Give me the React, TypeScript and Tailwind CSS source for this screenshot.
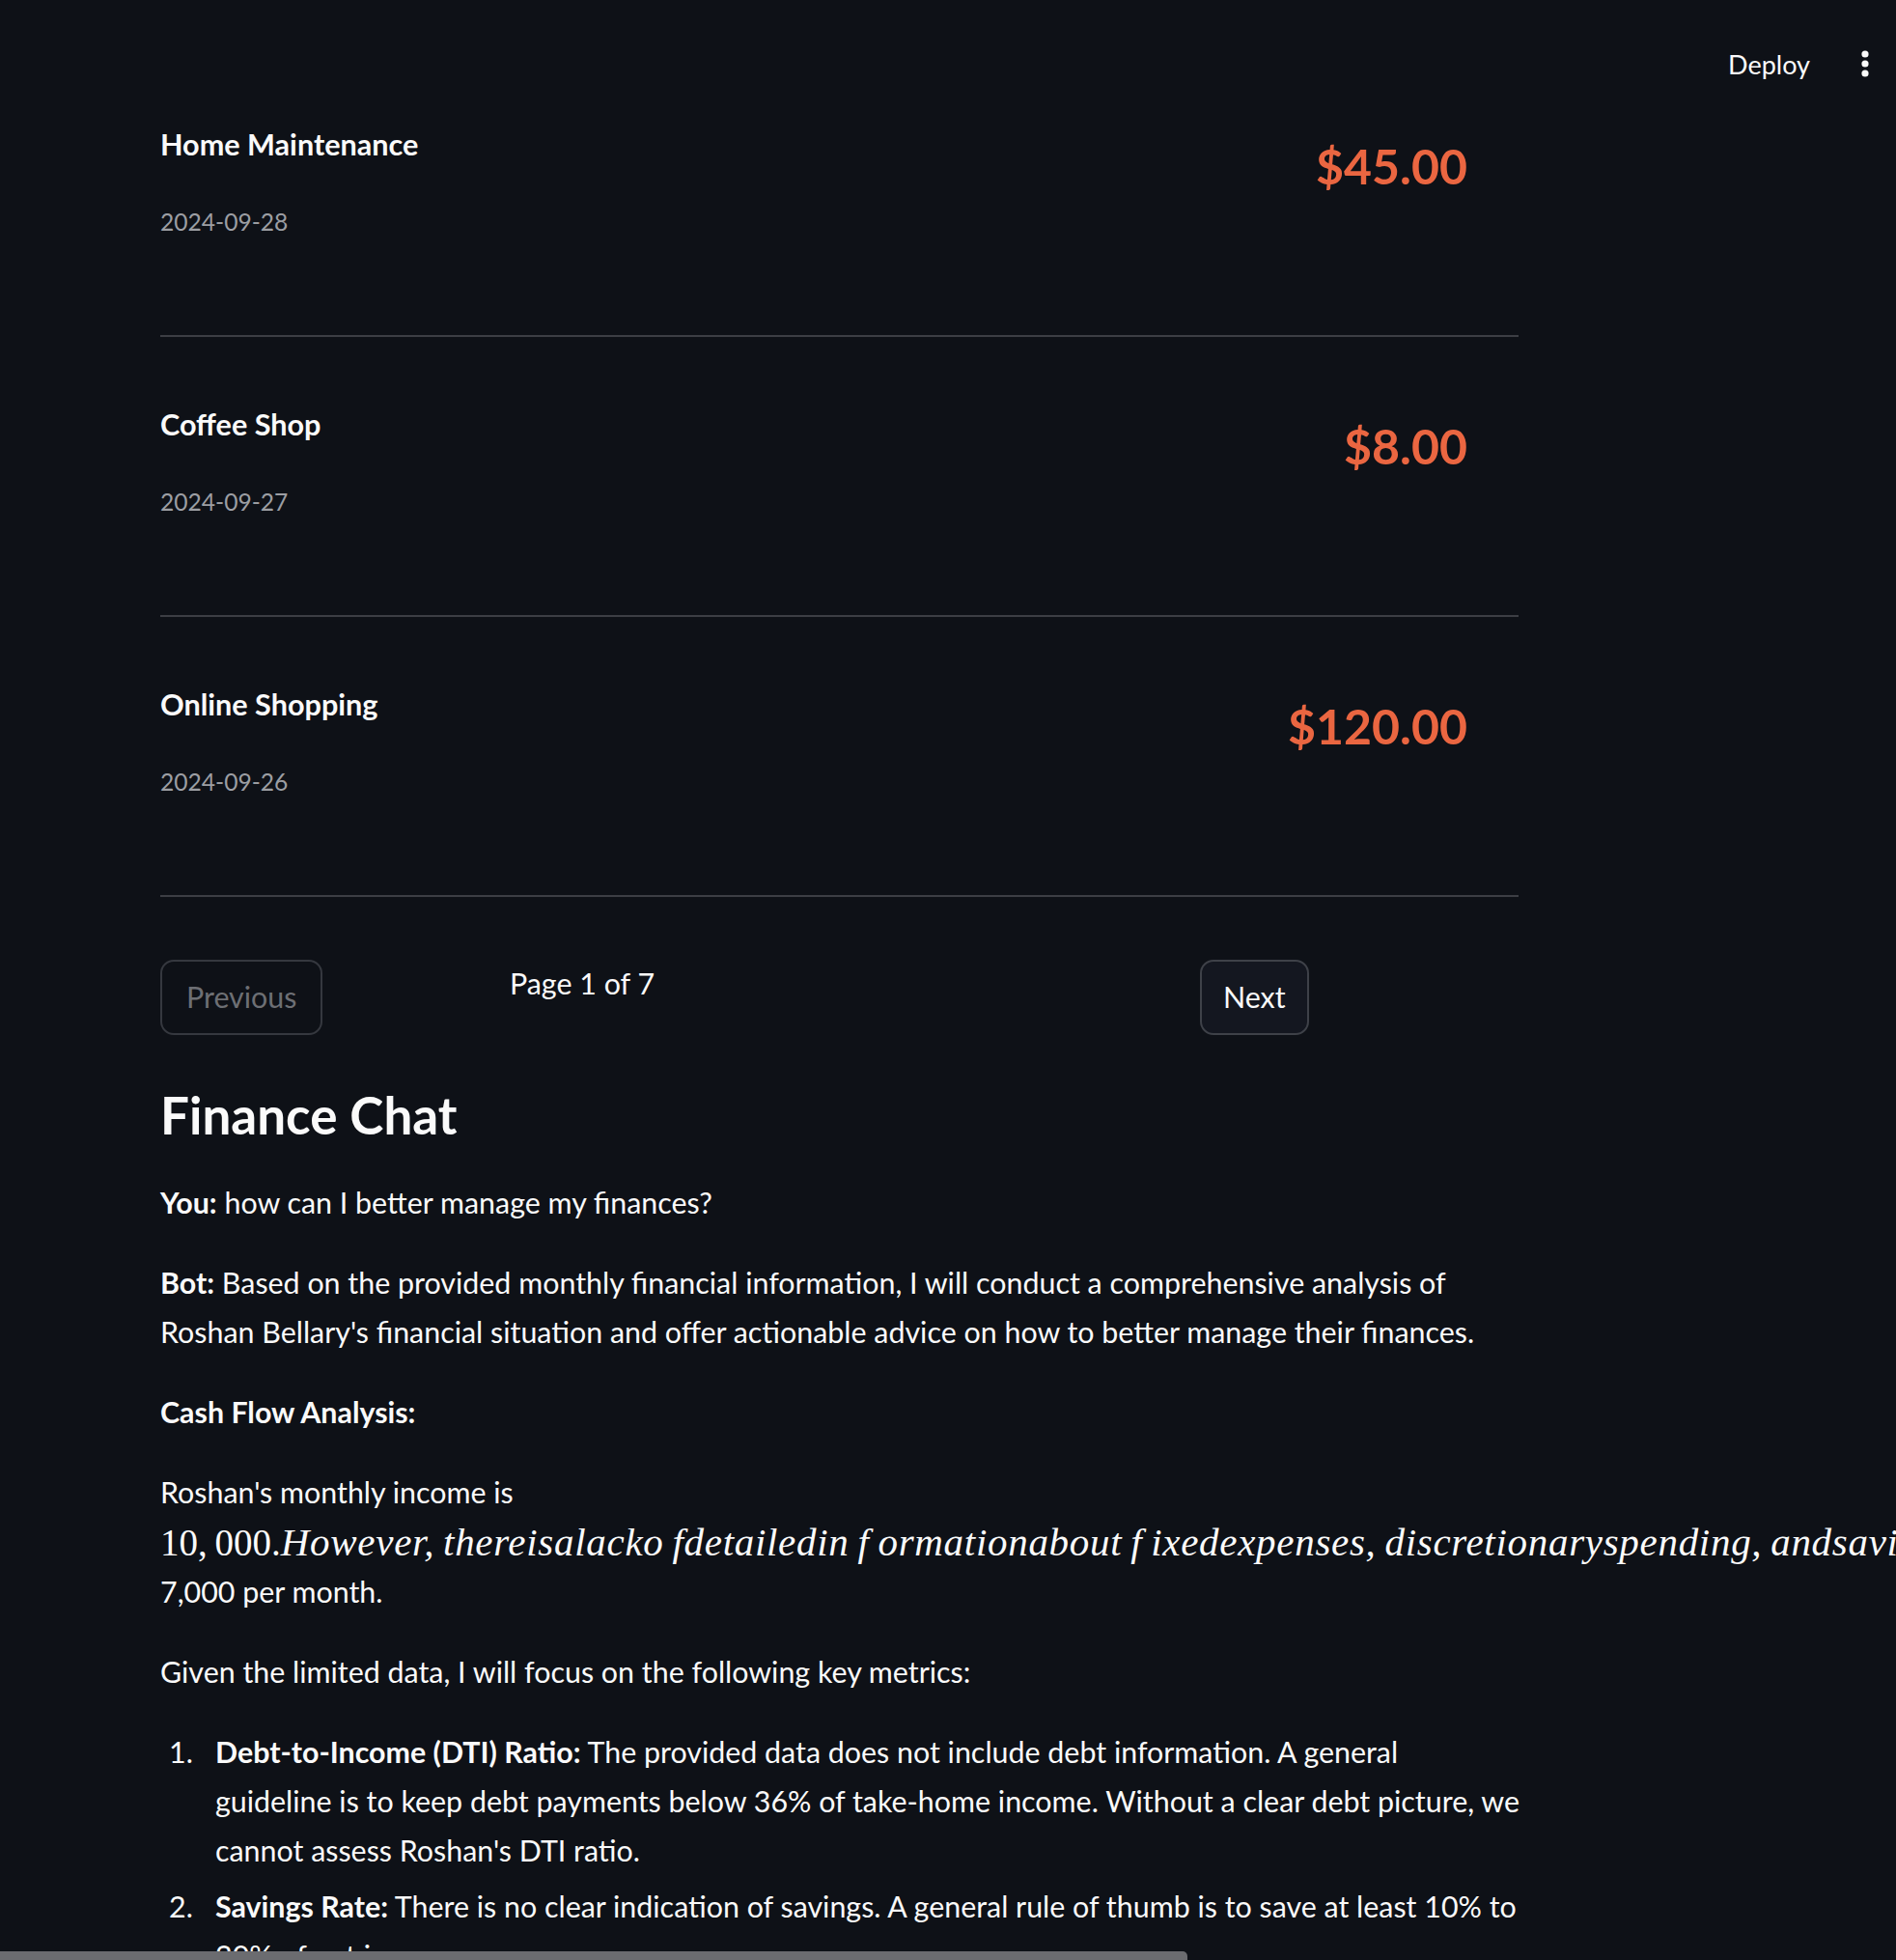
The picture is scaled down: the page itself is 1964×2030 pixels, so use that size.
import React from "react";

type Tx = { title: string; date: string; amount: string };

const txs: Tx[] = [
  { title: "Home Maintenance", date: "2024-09-28", amount: "$45.00" },
  { title: "Coffee Shop", date: "2024-09-27", amount: "$8.00" },
  { title: "Online Shopping", date: "2024-09-26", amount: "$120.00" },
];

function Kebab() {
  return (
    <svg width="10" height="30" viewBox="0 0 10 30" className="block">
      <circle cx="5" cy="5" r="3.6" fill="#fafafa" />
      <circle cx="5" cy="15" r="3.6" fill="#fafafa" />
      <circle cx="5" cy="25" r="3.6" fill="#fafafa" />
    </svg>
  );
}

export default function App() {
  const ts = "\u2009";
  return (
    <div className="relative w-full h-[2030px] overflow-hidden bg-[#0e1117] text-[#fafafa] font-['Lato',sans-serif]">
      {/* header overlay */}
      <div className="absolute top-0 inset-x-0 h-[132px] flex items-center justify-end pr-[27px] z-10">
        <span className="text-[27px] leading-none mr-[52px] text-[#fafafa]">Deploy</span>
        <Kebab />
      </div>

      <div className="ml-[166px] w-[1407px] pt-[59px]">
        {txs.map((t) => (
          <div key={t.title}>
            <div className="flex justify-between h-[288px]">
              <div className="pt-[65px]">
                <div className="text-[30.6px] leading-[51px] font-bold">{t.title}</div>
                <div className="mt-[32px] text-[24.6px] leading-[45px] text-[#9c9ea3]">{t.date}</div>
              </div>
              <div className="pt-[78px] pr-[53px]">
                <div className="text-[50px] leading-[70px] font-bold text-[#ea6641]">{t.amount}</div>
              </div>
            </div>
            <div className="h-[2px] bg-[#3c3e44]" />
          </div>
        ))}

        {/* pagination */}
        <div className="mt-[65px] grid grid-cols-[362px_715px_1fr] items-start">
          <div>
            <button className="h-[78px] px-[25px] rounded-[14px] border-2 border-[#35383f] text-[30.4px] text-[#6d6f74] bg-transparent">
              Previous
            </button>
          </div>
          <div className="text-[30.4px] leading-[51px] -mt-[1px]">Page 1 of 7</div>
          <div>
            <button className="h-[78px] px-[22px] rounded-[14px] border-2 border-[#3e4148] text-[30.4px] text-[#fafafa] bg-[#141720]">
              Next
            </button>
          </div>
        </div>

        {/* chat */}
        <h3 className="mt-[25px] pt-[24px] pb-[32px] text-[53px] leading-[67px] font-bold">Finance Chat</h3>

        <div className="text-[30.4px] leading-[51px]">
          <p className="mb-[32px] whitespace-nowrap">
            <b>You:</b> how can I better manage my finances?
          </p>
          <p className="mb-[32px] whitespace-nowrap">
            <b>Bot:</b> Based on the provided monthly financial information, I will conduct a comprehensive analysis of
            <br />
            Roshan Bellary's financial situation and offer actionable advice on how to better manage their finances.
          </p>
          <p className="mb-[32px] font-bold">Cash Flow Analysis:</p>
          <div className="mb-[32px]">
            <div>Roshan's monthly income is</div>
            <div className="h-[52px] leading-[52px] whitespace-nowrap text-[39px] font-['Liberation_Serif',serif]">
              <span>10,{ts}000.</span>
              <i className="text-[41px] tracking-[0.7px]">
                However,{ts}thereisalacko{ts}fdetailedin{ts}f{ts}ormationabout{ts}f{ts}ixedexpenses,{ts}discretionaryspending,{ts}andsavingsthatcontributetotheremaining
              </i>
            </div>
            <div>7,000 per month.</div>
          </div>
          <p className="mb-[32px]">Given the limited data, I will focus on the following key metrics:</p>
          <ol className="list-none">
            <li className="flex">
              <span className="w-[57px] shrink-0 pl-[9px]">1.</span>
              <div className="whitespace-nowrap">
                <b>Debt-to-Income (DTI) Ratio:</b> The provided data does not include debt information. A general
                <br />
                guideline is to keep debt payments below 36% of take-home income. Without a clear debt picture, we
                <br />
                cannot assess Roshan's DTI ratio.
              </div>
            </li>
            <li className="flex mt-[7px]">
              <span className="w-[57px] shrink-0 pl-[9px]">2.</span>
              <div className="whitespace-nowrap">
                <b>Savings Rate:</b> There is no clear indication of savings. A general rule of thumb is to save at least 10% to
                <br />
                20% of net income.
              </div>
            </li>
          </ol>
        </div>
      </div>

      {/* horizontal scrollbar overlay */}
      <div className="absolute bottom-0 left-0 w-[1230px] h-[9px] bg-[#6b6c70] rounded-tr-[5px]" />
    </div>
  );
}
